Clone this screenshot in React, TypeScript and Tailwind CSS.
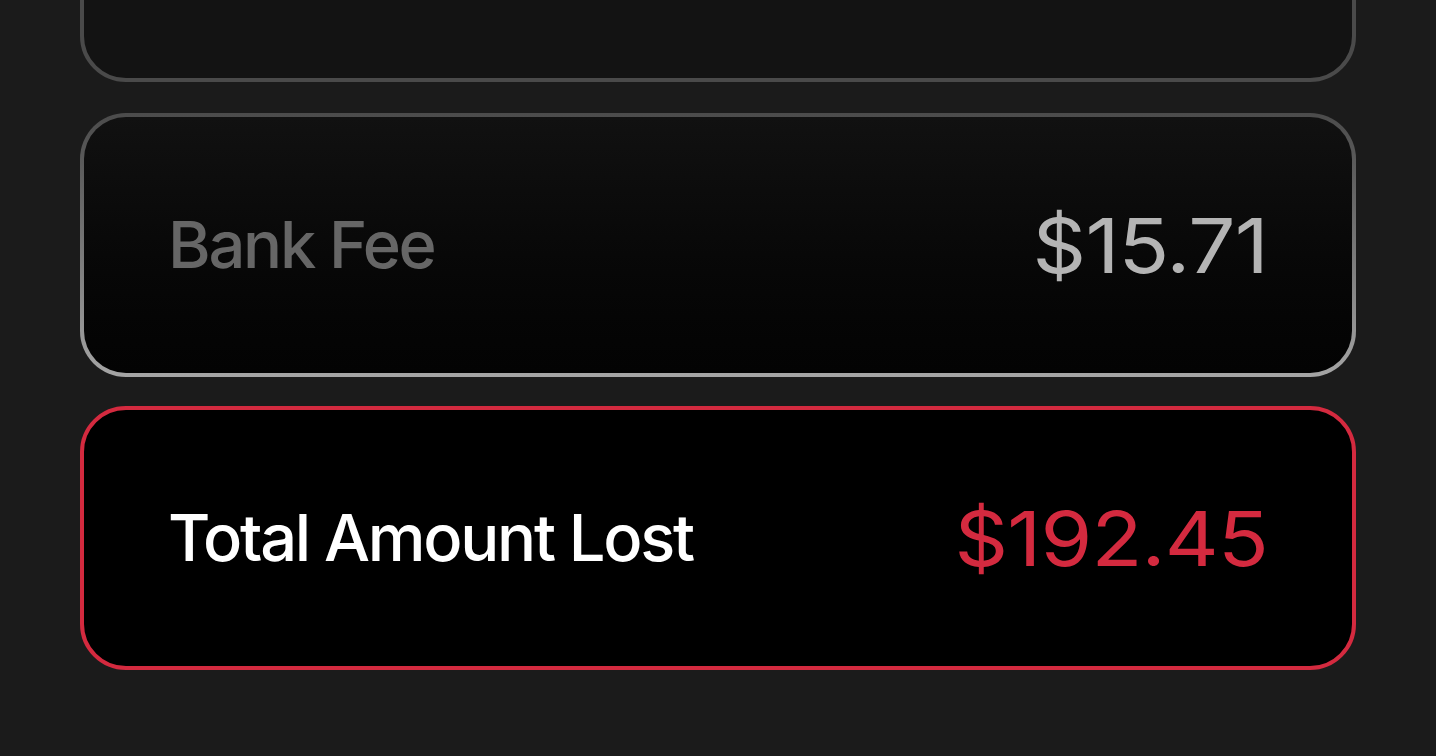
import React from 'react';

const font = { fontFamily: 'Inter, "Liberation Sans", sans-serif' };

const App = () => {
  return (
    <div className="h-[756px] w-full overflow-hidden bg-[#1b1b1b]" style={font}>
      <div className="mx-[80px] flex flex-col -mt-[182px]">
        {/* scrolled card above */}
        <div className="h-[264px] rounded-[46px] border-[4px] border-[#4a4a4a] bg-[#131313]" />

        {/* bank fee */}
        <div className="mt-[31px] rounded-[46px] bg-gradient-to-b from-[#4b4b4b] to-[#a5a5a5] p-[4px]">
          <div className="flex h-[256px] items-center justify-between rounded-[42px] bg-gradient-to-b from-[#111111] to-[#030303] pl-[84px] pr-[84px]">
            <span className="text-[65px] font-medium tracking-[-0.035em] text-[#666666]">Bank Fee</span>
            <span className="origin-right scale-x-110 text-[76px] font-normal tracking-[-0.01em] text-[#b4b4b4]">$15.71</span>
          </div>
        </div>

        {/* total */}
        <div className="mt-[29px] flex h-[264px] items-center justify-between rounded-[46px] border-[4px] border-[#d42a3f] bg-black pl-[84px] pr-[84px]">
          <span className="text-[65px] font-medium tracking-[-0.035em] text-white">Total Amount Lost</span>
          <span className="origin-right scale-x-110 text-[76px] font-normal tracking-[-0.01em] text-[#d42a3f]">$192.45</span>
        </div>
      </div>
    </div>
  );
};

export default App;
